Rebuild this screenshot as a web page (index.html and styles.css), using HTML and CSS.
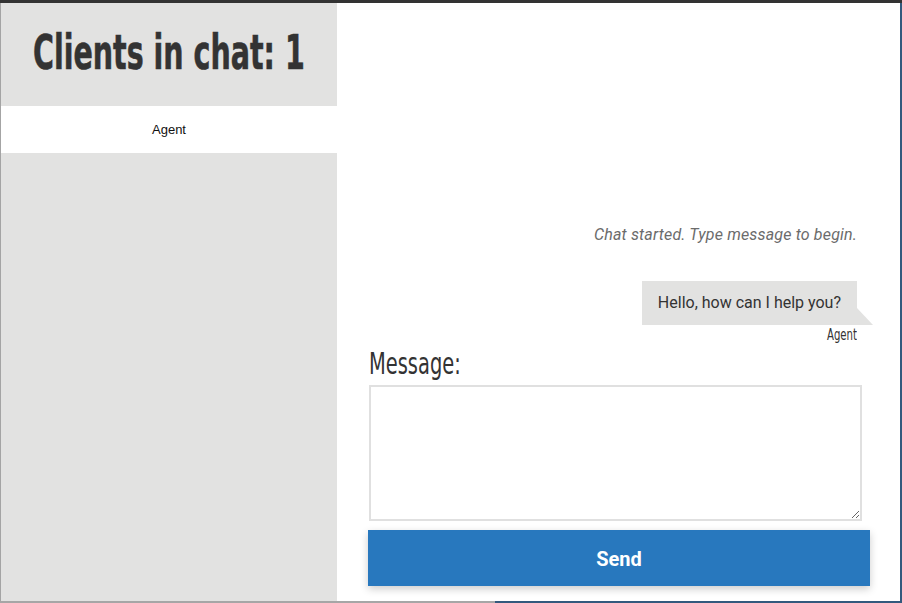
FILE: index.html
```html
<!DOCTYPE html>
<html>
<head>
<meta charset="utf-8">
<link rel="stylesheet" href="styles.css">
</head>
<body>
<div class="frame">
  <div class="topbar"></div>
  <div class="window">
    <aside class="sidebar">
      <div class="sidebar-head">
        <h1 class="clients"><span class="squish">Clients in chat: 1</span></h1>
      </div>
      <ul class="client-list">
        <li class="client">Agent</li>
      </ul>
    </aside>
    <main class="chat">
      <div class="log">
        <p class="system">Chat started. Type message to begin.</p>
        <div class="msg">
          <div class="bubble">Hello, how can I help you?</div>
          <div class="author"><span class="squish right">Agent</span></div>
        </div>
      </div>
      <form class="composer">
        <label class="label" for="m"><span class="squish left">Message:</span></label>
        <textarea id="m" class="input"></textarea>
        <button type="button" class="send">Send</button>
      </form>
    </main>
  </div>
  <div class="bottombar"></div>
</div>
</body>
</html>
```
FILE: styles.css
```css
html, body {
  margin: 0;
  padding: 0;
  background: #ffffff;
}
.frame {
  width: 902px;
  height: 603px;
  display: flex;
  flex-direction: column;
  box-sizing: border-box;
  overflow: hidden;
}
.topbar {
  height: 3px;
  background: #333333;
  flex: none;
}
.bottombar {
  height: 2px;
  flex: none;
  background: linear-gradient(to right, #a6a6a6 0, #a6a6a6 495px, #33597d 495px);
}
.window {
  flex: 1;
  display: flex;
  border-left: 1px solid #a4a4a4;
  border-right: 2px solid #33597d;
  min-height: 0;
}
.sidebar {
  width: 336px;
  flex: none;
  background: #e2e2e1;
  display: flex;
  flex-direction: column;
}
.sidebar-head {
  height: 103px;
  display: flex;
  align-items: flex-start;
  justify-content: center;
}
.clients {
  margin: 19px 0 0 0;
  font-family: "DejaVu Sans Condensed", "DejaVu Sans", sans-serif;
  font-weight: bold;
  font-size: 48px;
  line-height: 60px;
  color: #333333;
  white-space: nowrap;
  -webkit-text-stroke: 0.6px #333333;
}
.squish {
  display: inline-block;
  transform: scaleX(0.66);
  transform-origin: center;
}
.squish.left { transform: scaleX(0.72); transform-origin: left center; }
.squish.right { transform: scaleX(0.75); transform-origin: right center; }
.client-list {
  list-style: none;
  margin: 0;
  padding: 0;
}
.client {
  height: 47px;
  background: #ffffff;
  display: flex;
  align-items: center;
  justify-content: center;
  font-family: "Liberation Sans", Arial, sans-serif;
  font-size: 13px;
  color: #111111;
}
.chat {
  flex: 1;
  padding: 0 30px 0 31px;
  display: flex;
  flex-direction: column;
  font-family: Roboto, "Liberation Sans", sans-serif;
}
.log {
  padding: 222px 13px 0 0;
  display: flex;
  flex-direction: column;
  align-items: flex-end;
}
.system {
  margin: 0;
  font-style: italic;
  font-size: 16px;
  line-height: 20px;
  letter-spacing: 0.17px;
  color: #6b6b6b;
}
.msg {
  margin-top: 36px;
  display: flex;
  flex-direction: column;
  align-items: flex-end;
}
.bubble {
  position: relative;
  background: #e2e2e1;
  color: #333333;
  font-size: 16px;
  line-height: 20px;
  padding: 12px 16px;
}
.bubble::after {
  content: "";
  position: absolute;
  left: 100%;
  bottom: 0;
  border-left: 16px solid #e2e2e1;
  border-top: 17px solid transparent;
}
.author {
  font-family: "DejaVu Sans Condensed", "DejaVu Sans", sans-serif;
  font-size: 15px;
  line-height: 20px;
  color: #333333;
  margin-top: 0;
}
.composer {
  display: flex;
  flex-direction: column;
}
.label {
  font-family: "DejaVu Sans Condensed", "DejaVu Sans", sans-serif;
  font-size: 30px;
  line-height: 36px;
  color: #333333;
  margin-top: 1px;
  padding-left: 1px;
}
.input {
  margin: 3px 0 0 1px;
  width: 493px;
  height: 136px;
  box-sizing: border-box;
  border: 2px solid #e0e0e0;
  padding: 6px;
  resize: vertical;
  font-family: Roboto, sans-serif;
  font-size: 16px;
  background: #ffffff;
  outline: none;
}
.send {
  margin-top: 9px;
  width: 502px;
  height: 56px;
  border: none;
  background: #2878be;
  color: #ffffff;
  font-family: Roboto, sans-serif;
  font-weight: bold;
  font-size: 20px;
  padding-top: 2px;
  box-shadow: 0 3px 8px rgba(0, 0, 0, 0.2);
  cursor: pointer;
}
```
